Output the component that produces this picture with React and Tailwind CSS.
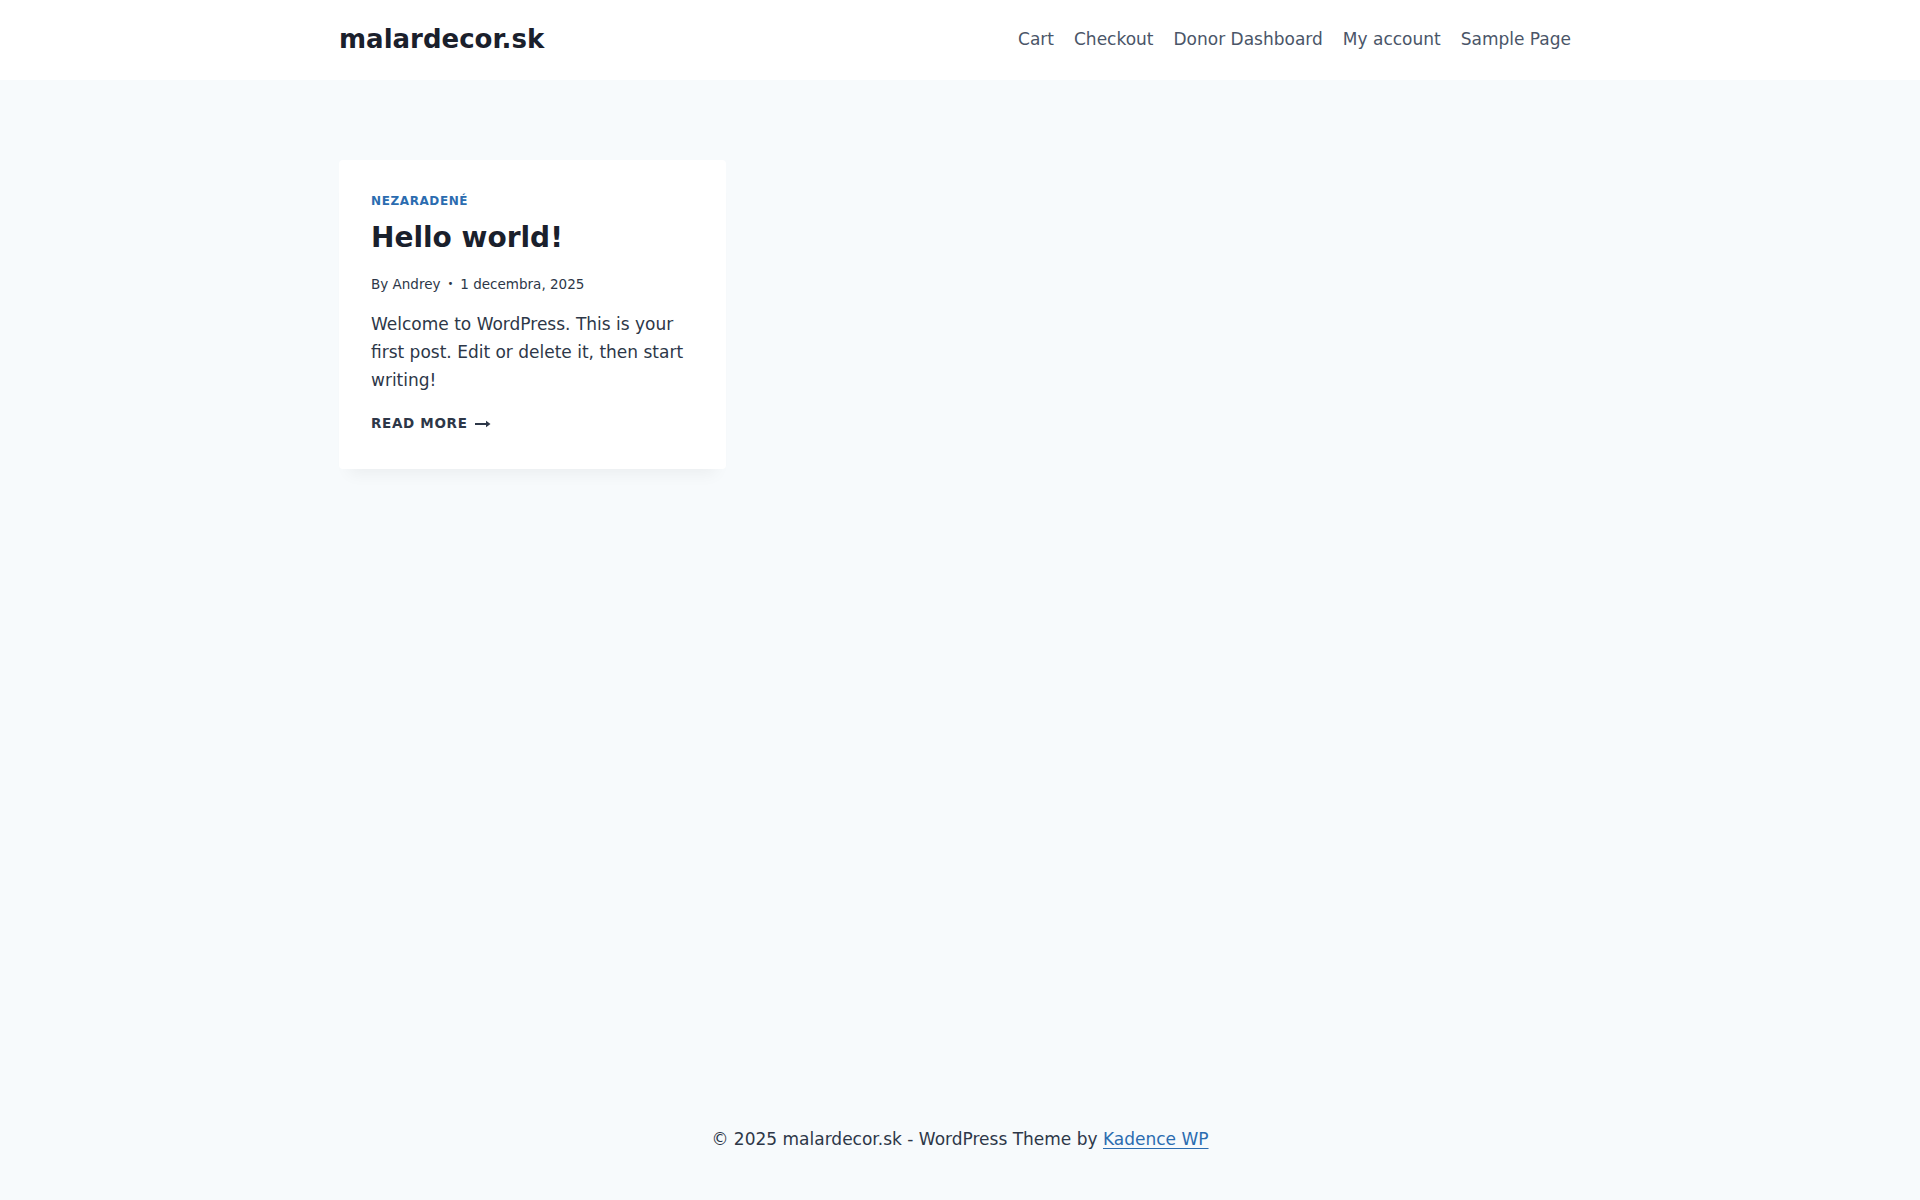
import React from "react";

export default function App() {
  const nav = ["Cart", "Checkout", "Donor Dashboard", "My account", "Sample Page"];
  return (
    <div className="min-h-screen flex flex-col bg-[#F7FAFC] text-[#2D3748] font-['DejaVu_Sans',sans-serif] text-[17px] leading-[1.6]">
      <header className="bg-white h-[80px]">
        <div className="max-w-[1290px] mx-auto px-6 h-full flex items-center justify-between pb-[2px]">
          <div className="text-[26px] font-bold text-[#1A202C] leading-none">malardecor.sk</div>
          <nav className="flex items-center">
            {nav.map((n) => (
              <a key={n} className="px-[10px] text-[17px] text-[#4A5568] leading-none">
                {n}
              </a>
            ))}
          </nav>
        </div>
      </header>

      <main className="flex-1">
        <div className="max-w-[1290px] mx-auto px-6 pt-[80px]">
          <div className="grid grid-cols-3 gap-10">
            <article className="bg-white rounded-[4px] shadow-[0px_15px_15px_-10px_rgba(0,0,0,0.05)] p-8 h-[309px]">
              <div className="text-[12px] font-bold uppercase tracking-[0.05em] text-[#2B6CB0] leading-[1.6]">
                Nezaradené
              </div>
              <h2 className="text-[28px] font-bold text-[#1A202C] leading-[1.5] mt-[6px]">Hello world!</h2>
              <div className="text-[13.5px] text-[#2D3748] mt-[14.5px] leading-[1.6] flex items-center">
                <span>By Andrey</span>
                <span className="mx-[7px] text-[10px]">•</span>
                <span>1 decembra, 2025</span>
              </div>
              <p className="mt-[16px] leading-[1.63] text-[17px] pr-2">
                Welcome to WordPress. This is your first post. Edit or delete it, then start writing!
              </p>
              <div className="mt-[19px] text-[13.5px] font-bold uppercase tracking-[0.05em] text-[#2D3748] leading-[1.6] flex items-center">
                <span>Read More</span>
                <svg className="ml-[7px]" width="16" height="8" viewBox="0 0 16 8" fill="none">
                  <path d="M0 4h13" stroke="#2D3748" strokeWidth="2" />
                  <path d="M11 0.8L15.5 4L11 7.2Z" fill="#2D3748" />
                </svg>
              </div>
            </article>
          </div>
        </div>
      </main>

      <footer className="pt-[30px] pb-[47px] text-center text-[17px] text-[#2D3748]">
        © 2025 malardecor.sk - WordPress Theme by{" "}
        <a className="text-[#2B6CB0] underline underline-offset-[3px]">Kadence WP</a>
      </footer>
    </div>
  );
}
